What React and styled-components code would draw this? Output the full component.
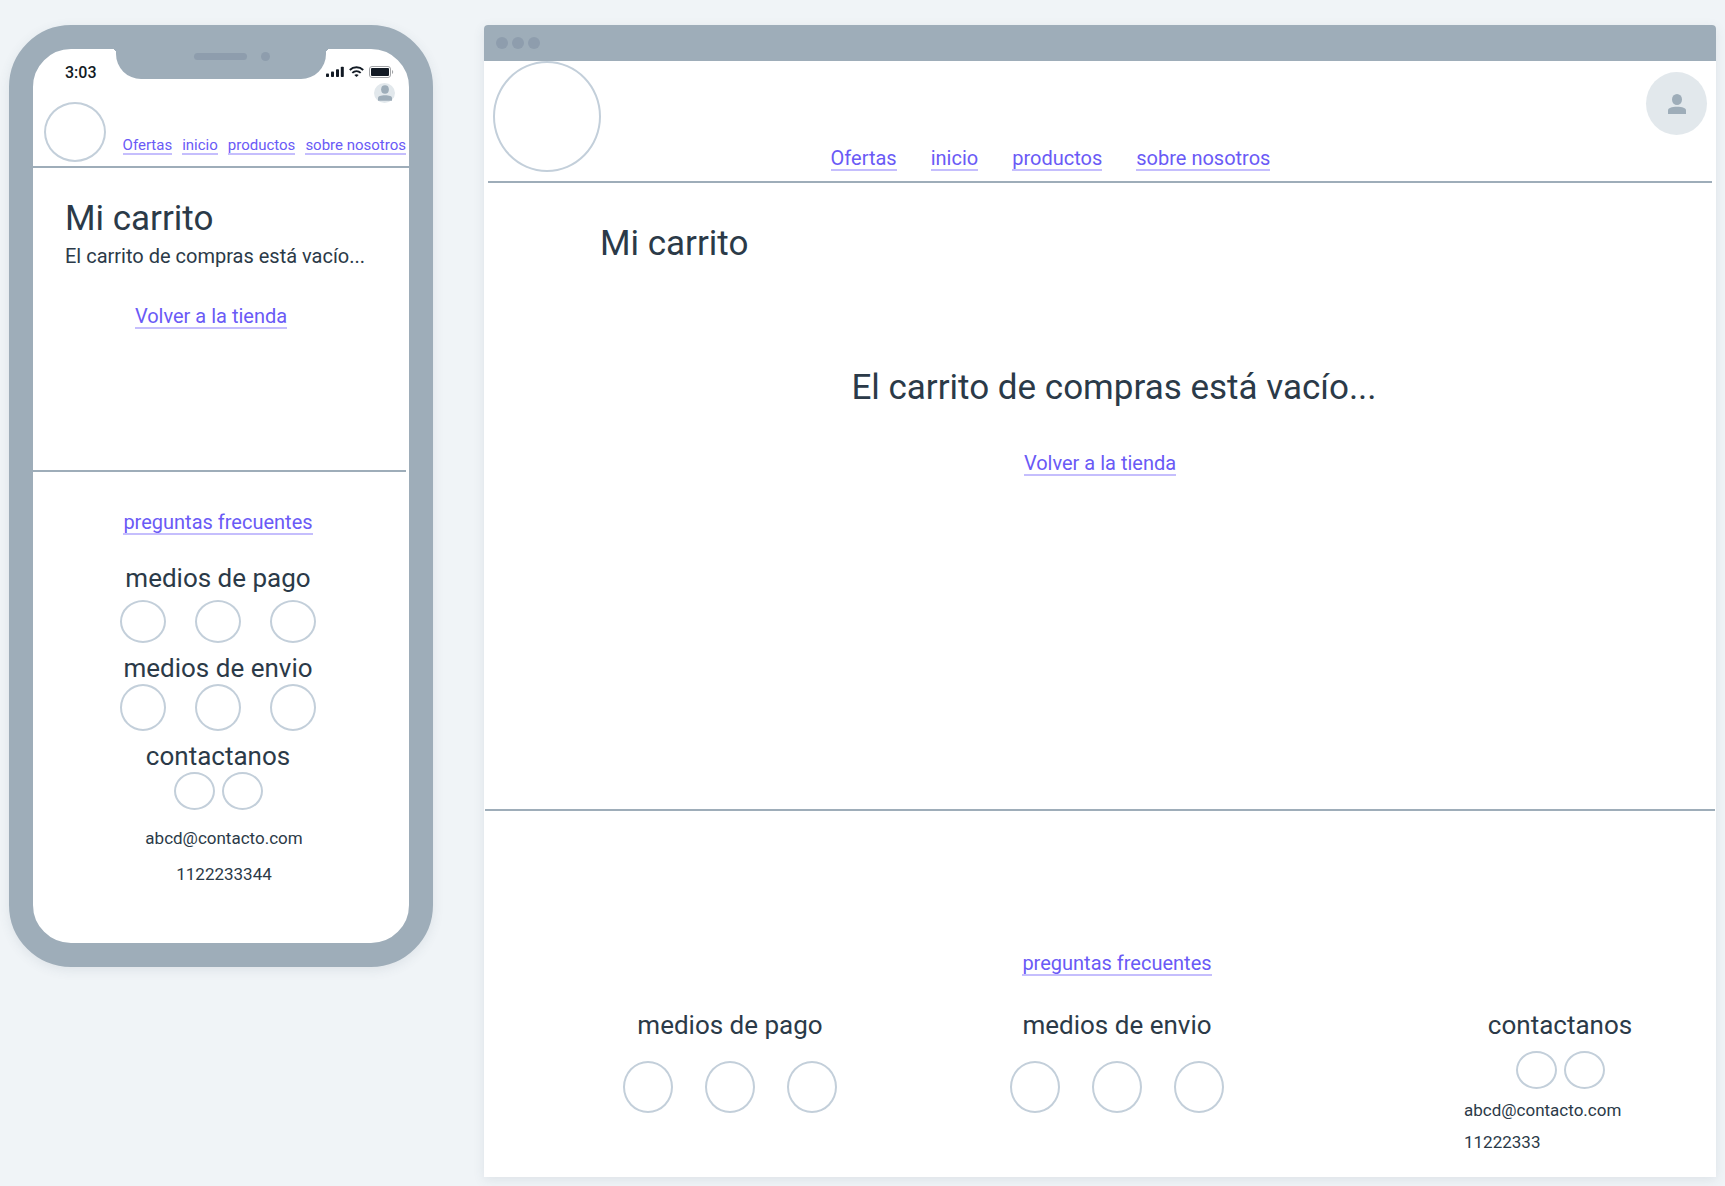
import React from "react";
import styled, { createGlobalStyle } from "styled-components";

const color = {
  page: "#f0f4f7",
  frame: "#9eadb9",
  frameDark: "#8e9dad",
  text: "#2b3a48",
  link: "#6a5af6",
  underline: "#c5befd",
  ring: "#c3cfda",
  avatar: "#e2e8ec",
  ink: "#121a24",
};

const GlobalStyle = createGlobalStyle`
  *, *::before, *::after { box-sizing: border-box; }
  body {
    margin: 0;
    background: ${color.page};
    color: ${color.text};
    font-family: Roboto, "Liberation Sans", sans-serif;
  }
  h1, h2, p { margin: 0; font-weight: 400; }
`;

/* Shared pieces */

const Board = styled.div`
  display: flex;
  align-items: flex-start;
  gap: 51px;
  padding: 25px 9px 9px;
`;

const Link = styled.a`
  display: inline-block;
  border-bottom: 2px solid ${color.underline};
  color: ${color.link};
  font-size: ${(p) => (p.$small ? 15 : 20)}px;
  line-height: ${(p) => (p.$small ? 16 : 22)}px;
  text-decoration: none;
  white-space: nowrap;
`;

const Title = styled.h1`
  font-size: 35px;
  line-height: 40px;
`;

const Heading = styled.h2`
  font-size: 26px;
  line-height: 30px;
  text-align: center;
  white-space: nowrap;
`;

const Ring = styled.span`
  display: block;
  flex: none;
  width: ${(p) => p.$w}px;
  height: ${(p) => p.$h}px;
  border: 2px solid ${color.ring};
  border-radius: 50%;
`;

const RingRow = styled.div`
  display: flex;
  justify-content: center;
  gap: ${(p) => p.$gap}px;
`;

const Avatar = styled.button`
  display: flex;
  align-items: center;
  justify-content: center;
  flex: none;
  width: ${(p) => p.$w}px;
  height: ${(p) => p.$h}px;
  padding: 0;
  border: 0;
  border-radius: 50%;
  background: ${color.avatar};
`;

const Contact = styled.address`
  display: flex;
  flex-direction: column;
  font-size: 17px;
  font-style: normal;
  line-height: 20px;
`;

function PersonIcon({ width, height }) {
  return (
    <svg width={width} height={height} viewBox="0 0 18 20" fill={color.frame} aria-hidden="true">
      <ellipse cx="9" cy="5.5" rx="5" ry="5.5" />
      <path d="M0 20v-3.6C0 14 3.6 12.8 9 12.8s9 1.200 9 3.600V20z" />
    </svg>
  );
}

function Rings({ count, w, h, gap }) {
  return (
    <RingRow $gap={gap}>
      {Array.from({ length: count }, (_, i) => (
        <Ring key={i} $w={w} $h={h} />
      ))}
    </RingRow>
  );
}

function NavLinks({ small }) {
  return ["Ofertas", "inicio", "productos", "sobre nosotros"].map((label) => (
    <Link key={label} href="#" $small={small}>
      {label}
    </Link>
  ));
}

/* Phone */

const Phone = styled.section`
  flex: 0 0 424px;
  border: 24px solid ${color.frame};
  border-radius: 62px;
  background: #fff;
  box-shadow: 0 3px 12px rgba(60, 80, 100, 0.1);
`;

const StatusBar = styled.div`
  display: grid;
  grid-template-columns: 1fr 210px 1fr;
  height: 34px;
`;

const Clock = styled.time`
  padding: 15px 0 0 32px;
  color: ${color.ink};
  font-size: 16px;
  font-weight: 500;
  line-height: 18px;
`;

const Notch = styled.div`
  position: relative;
  display: flex;
  justify-content: center;
  gap: 14px;
  height: 30px;
  padding: 3px 0 0 21px;
  border-radius: 0 0 25px 25px;
  background: ${color.frame};

  &::before,
  &::after {
    content: "";
    position: absolute;
    top: 0;
    width: 4px;
    height: 4px;
  }
  &::before {
    right: 100%;
    background: radial-gradient(circle at 0 100%, transparent 4px, ${color.frame} 4px);
  }
  &::after {
    left: 100%;
    background: radial-gradient(circle at 100% 100%, transparent 4px, ${color.frame} 4px);
  }
`;

const Speaker = styled.span`
  width: 53px;
  height: 7px;
  margin-top: 1px;
  border-radius: 4px;
  background: ${color.frameDark};
`;

const Camera = styled.span`
  width: 9px;
  height: 9px;
  border-radius: 50%;
  background: ${color.frameDark};
`;

const StatusIcons = styled.div`
  display: flex;
  gap: 5px;
  padding-top: 17px;
`;

const PhoneHeader = styled.header`
  display: flex;
  align-items: stretch;
  height: 85px;
  padding-left: 11px;
  border-bottom: 2px solid ${color.frame};
`;

const PhoneLogo = styled.div`
  display: flex;
  align-items: flex-end;
  padding-bottom: 4px;
`;

const PhoneTools = styled.div`
  display: flex;
  flex: 1;
  flex-direction: column;
  align-items: flex-end;
  justify-content: space-between;
  padding-bottom: 11px;
`;

const PhoneAccount = styled.div`
  padding-right: 14px;
`;

const PhoneNav = styled.nav`
  display: flex;
  gap: 10px;
  padding-right: 3px;
`;

const PhoneMain = styled.main`
  min-height: 302px;
  padding: 31px 32px 0;
`;

const PhoneMessage = styled.p`
  margin-top: 5px;
  font-size: 20px;
  line-height: 24px;
  white-space: nowrap;
`;

const PhoneAction = styled.div`
  display: flex;
  justify-content: center;
  padding: 37px 20px 0 0;
`;

const PhoneFooter = styled.footer`
  display: flex;
  flex-direction: column;
  align-items: center;
  gap: 10px;
  margin-right: 3px;
  padding: 39px 3px 59px 0;
  border-top: 2px solid ${color.frame};
`;

const PhoneGroup = styled.div`
  display: flex;
  flex-direction: column;
  gap: ${(p) => p.$gap}px;
`;

const PhoneFaq = styled.div`
  padding-bottom: 18px;
`;

const PhoneContact = styled(Contact)`
  align-items: center;
  gap: 16px;
  padding: 8px 0 0 12px;
`;

function PhoneMockup() {
  return (
    <Phone aria-label="Carrito móvil">
      <StatusBar>
        <Clock>3:03</Clock>
        <Notch>
          <Speaker />
          <Camera />
        </Notch>
        <StatusIcons>
          <svg width="18" height="12" viewBox="0 0 18 12" fill={color.ink} aria-hidden="true">
            <rect x="0" y="7.500" width="3" height="3.500" rx="0.8" />
            <rect x="5" y="5.500" width="3" height="5.500" rx="0.8" />
            <rect x="10" y="3.200" width="3" height="7.800" rx="0.8" />
            <rect x="14.800" y="0.800" width="3" height="10.200" rx="0.8" />
          </svg>
          <svg width="15" height="12" viewBox="0 0 15 12" fill="none" stroke={color.ink} strokeWidth="1.900" aria-hidden="true">
            <path d="M.8 4C4.500.3 10.500.3 14.200 4" />
            <path d="M3.300 6.900c2.400-2.300 6-2.300 8.400 0" />
            <path d="M7.500 11 5.300 8.900c1.300-1 3.100-1 4.400 0z" fill={color.ink} stroke="none" />
          </svg>
          <svg width="25" height="12" viewBox="0 0 25 12" aria-hidden="true">
            <rect x="0.500" y="0.500" width="21" height="11" rx="2.500" fill="none" stroke="#a3a5a8" />
            <rect x="2" y="2" width="18" height="8" rx="1" fill={color.ink} />
            <path d="M23 4c1.600.8 1.600 3.200 0 4z" fill="#a3a5a8" />
          </svg>
        </StatusIcons>
      </StatusBar>

      <PhoneHeader>
        <PhoneLogo>
          <Ring $w={62} $h={60} />
        </PhoneLogo>
        <PhoneTools>
          <PhoneAccount>
            <Avatar $w={21} $h={20} aria-label="Cuenta">
              <PersonIcon width={14} height={16} />
            </Avatar>
          </PhoneAccount>
          <PhoneNav>
            <NavLinks small />
          </PhoneNav>
        </PhoneTools>
      </PhoneHeader>

      <PhoneMain>
        <Title>Mi carrito</Title>
        <PhoneMessage>El carrito de compras está vacío...</PhoneMessage>
        <PhoneAction>
          <Link href="#">Volver a la tienda</Link>
        </PhoneAction>
      </PhoneMain>

      <PhoneFooter>
        <PhoneFaq>
          <Link href="#">preguntas frecuentes</Link>
        </PhoneFaq>
        <PhoneGroup $gap={7}>
          <Heading>medios de pago</Heading>
          <Rings count={3} w={46} h={43} gap={29} />
        </PhoneGroup>
        <PhoneGroup $gap={1}>
          <Heading>medios de envio</Heading>
          <Rings count={3} w={46} h={47} gap={29} />
        </PhoneGroup>
        <PhoneGroup $gap={1}>
          <Heading>contactanos</Heading>
          <Rings count={2} w={41} h={38} gap={7} />
        </PhoneGroup>
        <PhoneContact>
          <span>abcd@contacto.com</span>
          <span>1122233344</span>
        </PhoneContact>
      </PhoneFooter>
    </Phone>
  );
}

/* Browser window */

const Browser = styled.section`
  flex: 1;
  min-width: 0;
  border-radius: 4px 4px 0 0;
  background: #fff;
  box-shadow: 0 3px 12px rgba(60, 80, 100, 0.1);
`;

const TitleBar = styled.div`
  display: flex;
  align-items: center;
  gap: 4px;
  height: 36px;
  padding: 0 12px;
  border-radius: 4px 4px 0 0;
  background: ${color.frame};
`;

const Dot = styled.span`
  width: 12px;
  height: 12px;
  border-radius: 50%;
  background: ${color.frameDark};
`;

const BrowserHeader = styled.header`
  display: flex;
  align-items: flex-start;
  margin: 0 4px;
  padding: 0 5px 9px;
  border-bottom: 2px solid ${color.frame};
`;

const BrowserNav = styled.nav`
  display: flex;
  flex: 1;
  align-self: flex-end;
  justify-content: center;
  gap: 34px;
  padding: 0 146px 1px 0;
`;

const BrowserAccount = styled.div`
  padding-top: 11px;
`;

const BrowserMain = styled.main`
  min-height: 626px;
  padding: 41px 116px 0;
`;

const EmptyCart = styled.div`
  display: flex;
  flex-direction: column;
  align-items: center;
  gap: 44px;
  padding-top: 104px;
`;

const BrowserMessage = styled.p`
  padding-left: 28px;
  font-size: 35px;
  line-height: 40px;
`;

const BrowserFooter = styled.footer`
  display: grid;
  grid-template-columns: 387fr 454fr 192px;
  row-gap: 34px;
  margin: 0 1px;
  padding: 141px 59px 25px 138px;
  border-top: 2px solid ${color.frame};
`;

const FaqCell = styled.div`
  grid-column: 2 / 4;
  width: 214px;
  text-align: center;
`;

const BrowserGroup = styled.div`
  display: flex;
  flex-direction: column;
  gap: ${(p) => p.$gap}px;
  width: ${(p) => p.$w}px;
`;

const BrowserContact = styled(Contact)`
  gap: 12px;
`;

function BrowserMockup() {
  return (
    <Browser aria-label="Carrito de escritorio">
      <TitleBar>
        <Dot />
        <Dot />
        <Dot />
      </TitleBar>

      <BrowserHeader>
        <Ring $w={108} $h={111} />
        <BrowserNav>
          <NavLinks />
        </BrowserNav>
        <BrowserAccount>
          <Avatar $w={61} $h={63} aria-label="Cuenta">
            <PersonIcon width={18} height={20} />
          </Avatar>
        </BrowserAccount>
      </BrowserHeader>

      <BrowserMain>
        <Title>Mi carrito</Title>
        <EmptyCart>
          <BrowserMessage>El carrito de compras está vacío...</BrowserMessage>
          <Link href="#">Volver a la tienda</Link>
        </EmptyCart>
      </BrowserMain>

      <BrowserFooter>
        <FaqCell>
          <Link href="#">preguntas frecuentes</Link>
        </FaqCell>
        <BrowserGroup $w={214} $gap={21}>
          <Heading>medios de pago</Heading>
          <Rings count={3} w={50} h={52} gap={32} />
        </BrowserGroup>
        <BrowserGroup $w={214} $gap={21}>
          <Heading>medios de envio</Heading>
          <Rings count={3} w={50} h={52} gap={32} />
        </BrowserGroup>
        <BrowserGroup $w={192} $gap={11}>
          <Heading>contactanos</Heading>
          <Rings count={2} w={41} h={38} gap={7} />
          <BrowserContact>
            <span>abcd@contacto.com</span>
            <span>11222333</span>
          </BrowserContact>
        </BrowserGroup>
      </BrowserFooter>
    </Browser>
  );
}

export default function App() {
  return (
    <>
      <GlobalStyle />
      <Board>
        <PhoneMockup />
        <BrowserMockup />
      </Board>
    </>
  );
}
